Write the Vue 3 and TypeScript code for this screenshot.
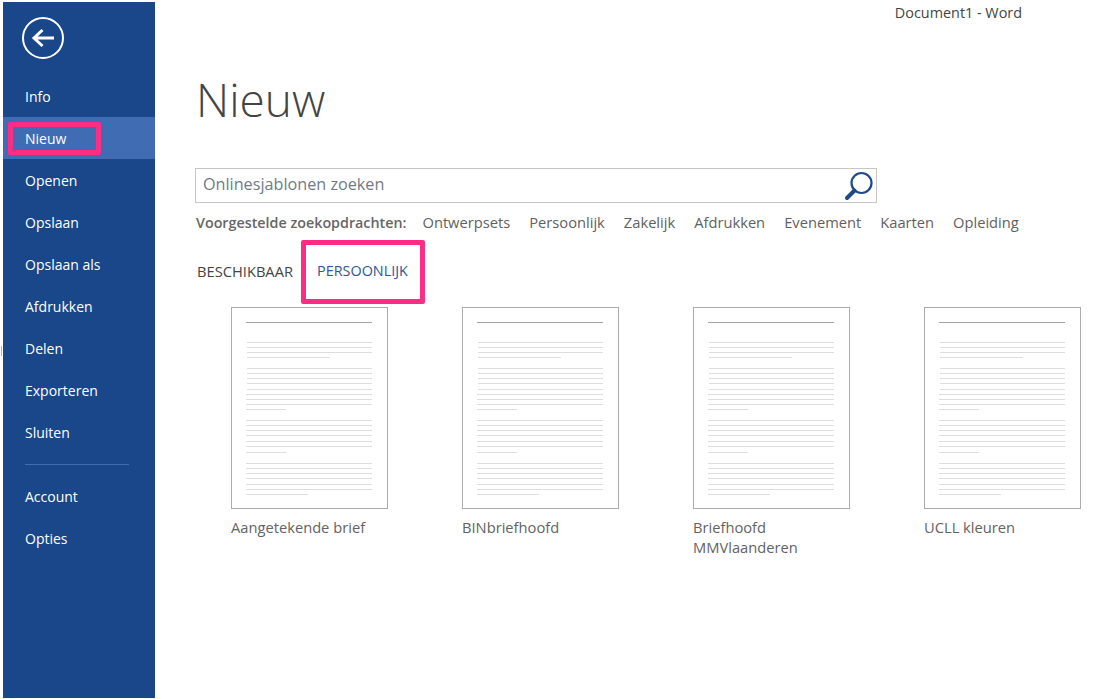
<script setup lang="ts">
const topItems = ['Info', 'Nieuw', 'Openen', 'Opslaan', 'Opslaan als', 'Afdrukken', 'Delen', 'Exporteren', 'Sluiten']
const bottomItems = ['Account', 'Opties']
const suggestions = ['Ontwerpsets', 'Persoonlijk', 'Zakelijk', 'Afdrukken', 'Evenement', 'Kaarten', 'Opleiding']
const templates = [
  { name: 'Aangetekende brief' },
  { name: 'BINbriefhoofd' },
  { name: 'Briefhoofd MMVlaanderen' },
  { name: 'UCLL kleuren' },
]
const rows: [number, number, number][] = [
  [36, 16, 142], [41, 16, 142], [46, 16, 142], [51, 16, 100],
  [62, 16, 142], [67, 16, 142], [72, 16, 142], [77, 16, 142], [83, 16, 142],
  [88, 15, 142], [93, 15, 142], [98, 15, 142], [103, 15, 56],
  [114, 15, 142], [119, 15, 142], [124, 15, 142], [129, 15, 142], [135, 15, 142], [140, 15, 142], [146, 15, 56],
  [157, 15, 142], [162, 15, 142], [167, 15, 142], [172, 15, 142], [178, 15, 142], [183, 15, 142], [188, 15, 78],
]
</script>

<template>
  <div class="page">
    <span class="sliver"></span>
    <aside class="side">
      <div class="back">
        <svg width="42" height="42" viewBox="0 0 42 42" fill="none">
          <circle cx="21" cy="21" r="20" stroke="#fff" stroke-width="2" />
          <path d="M12 21H32M20.5 13L12 21L20.5 29" stroke="#fff" stroke-width="3" />
        </svg>
      </div>
      <nav class="menu">
        <a v-for="it in topItems" :key="it" class="item" :class="{ active: it === 'Nieuw' }">
          {{ it }}
          <span v-if="it === 'Nieuw'" class="mark mark-nav"></span>
        </a>
      </nav>
      <div class="sep"></div>
      <nav class="menu">
        <a v-for="it in bottomItems" :key="it" class="item">{{ it }}</a>
      </nav>
    </aside>
    <main class="main">
      <div class="wintitle">Document1 - Word</div>
      <h1 class="title">Nieuw</h1>
      <div class="search">
        <span class="placeholder">Onlinesjablonen zoeken</span>
        <svg class="mag" width="30" height="30" viewBox="0 0 30 30" fill="none">
          <circle cx="17.5" cy="12" r="10" stroke="#1c4a8b" stroke-width="2.2" />
          <path d="M10.5 19.5L3 27" stroke="#1c4a8b" stroke-width="4" stroke-linecap="round" />
        </svg>
      </div>
      <div class="suggest">
        <span class="suggest-label">Voorgestelde zoekopdrachten:</span>
        <a v-for="s in suggestions" :key="s" class="suggest-link">{{ s }}</a>
      </div>
      <div class="tabs">
        <span class="tab">BESCHIKBAAR</span>
        <span class="tab tab-on">
          PERSOONLIJK
          <span class="mark mark-tab"></span>
        </span>
      </div>
      <div class="grid">
        <figure v-for="t in templates" :key="t.name" class="tpl">
          <svg class="doc" width="157" height="202" viewBox="0 0 157 202">
            <rect x="0.5" y="0.5" width="156" height="201" fill="#fff" stroke="#ababab" />
            <line x1="15" x2="141" y1="15.5" y2="15.5" stroke="#a3a3a3" />
            <line
              v-for="(r, i) in rows"
              :key="i"
              :x1="r[1]"
              :x2="r[2] - 1"
              :y1="r[0] - 0.5"
              :y2="r[0] - 0.5"
              stroke="#dedede"
            />
          </svg>
          <figcaption>{{ t.name }}</figcaption>
        </figure>
      </div>
    </main>
  </div>
</template>

<style scoped>
.page {
  position: relative;
  display: flex;
  width: 1103px;
  height: 699px;
  box-sizing: border-box;
  padding: 2px 0 1px 3px;
  background: #fff;
  font-family: "Open Sans", "Noto Sans", sans-serif;
  overflow: hidden;
}
.sliver {
  position: absolute;
  left: 1px;
  top: 346px;
  width: 1px;
  height: 10px;
  background: #b5b5b5;
}
.side {
  width: 152px;
  flex: none;
  background: #19478a;
  display: flex;
  flex-direction: column;
}
.back {
  height: 73px;
  padding: 15px 0 0 19px;
  box-sizing: border-box;
}
.back svg { display: block; }
.menu { display: flex; flex-direction: column; }
.item {
  position: relative;
  box-sizing: border-box;
  height: 42px;
  line-height: 42px;
  padding: 1px 0 0 22px;
  color: #fff;
  font-size: 14px;
}
.item.active { background: #3f6cb3; }
.mark {
  position: absolute;
  box-sizing: border-box;
  border: 5px solid #fd2d86;
  border-radius: 2px;
}
.mark-nav { left: 5px; top: 5px; width: 93px; height: 33px; }
.sep {
  height: 1px;
  background: #3f6cb3;
  margin: 11px 26px 10px 22px;
}
.main {
  flex: 1;
  min-width: 0;
  padding-left: 40px;
  color: #444;
}
.wintitle {
  height: 22px;
  line-height: 22px;
  padding-right: 81px;
  text-align: right;
  font-size: 14.4px;
  color: #444;
}
.title {
  margin: 45px 0 0;
  height: 99px;
  padding-left: 1px;
  box-sizing: border-box;
  font-size: 46px;
  font-weight: 300;
  line-height: 60px;
  color: #444;
}
.search {
  display: flex;
  align-items: center;
  justify-content: space-between;
  box-sizing: border-box;
  width: 682px;
  height: 35px;
  border: 1px solid #c6c6c6;
  padding: 0 2px 0 7px;
}
.placeholder { font-size: 16.2px; line-height: 30px; margin-top: -3px; color: #6f7b87; }
.mag { display: block; }
.suggest {
  display: flex;
  gap: 19px;
  margin-top: 9px;
  padding-left: 1px;
  height: 22px;
  line-height: 22px;
  font-size: 14.7px;
  font-weight: 500;
  color: #5f5f5f;
  white-space: nowrap;
}
.suggest-link { margin-top: -1px; }
.suggest-label { font-weight: 600; font-size: 14.3px; color: #666; margin-right: -3px; }
.tabs {
  display: flex;
  gap: 24px;
  margin-top: 6px;
  height: 48px;
  padding-left: 2px;
  line-height: 62px;
}
.tab { position: relative; color: #444; font-size: 14.7px; }
.tab-on { color: #2b579a; font-size: 14.4px; }
.mark-tab { left: -16px; top: 0; width: 124px; height: 64px; }
.grid {
  display: flex;
  gap: 74px;
  padding-left: 36px;
  margin-top: 19px;
}
.tpl {
  margin: 0;
  width: 157px;
  flex: none;
}
.doc { display: block; }
figcaption {
  margin-top: 8px;
  font-size: 14.7px;
  line-height: 20px;
  color: #636363;
}
</style>
